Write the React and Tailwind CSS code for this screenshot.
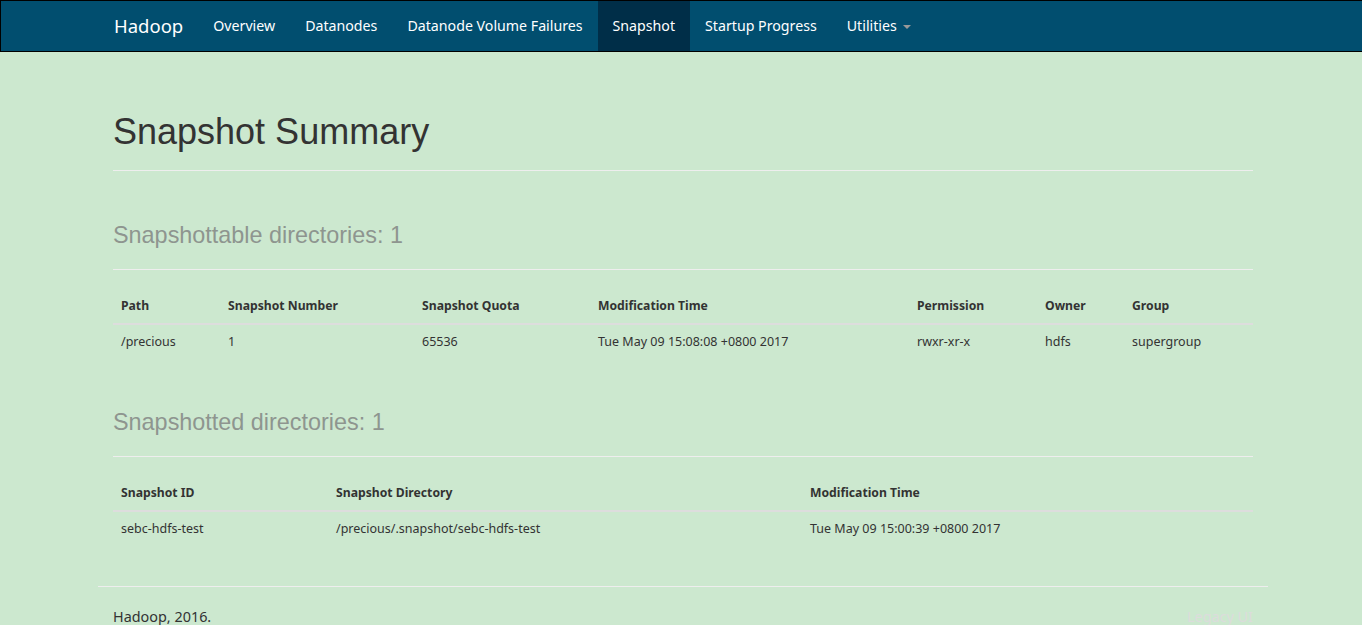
import React from "react";

const navItems = [
  { label: "Overview" },
  { label: "Datanodes" },
  { label: "Datanode Volume Failures" },
  { label: "Snapshot", active: true },
  { label: "Startup Progress" },
];

const snapshottable = {
  cols: [
    ["Path", "w-[107px]"],
    ["Snapshot Number", "w-[194px]"],
    ["Snapshot Quota", "w-[176px]"],
    ["Modification Time", "w-[319px]"],
    ["Permission", "w-[128px]"],
    ["Owner", "w-[87px]"],
    ["Group", ""],
  ],
  rows: [["/precious", "1", "65536", "Tue May 09 15:08:08 +0800 2017", "rwxr-xr-x", "hdfs", "supergroup"]],
};

const snapshotted = {
  cols: [
    ["Snapshot ID", "w-[215px]"],
    ["Snapshot Directory", "w-[474px]"],
    ["Modification Time", ""],
  ],
  rows: [["sebc-hdfs-test", "/precious/.snapshot/sebc-hdfs-test", "Tue May 09 15:00:39 +0800 2017"]],
};

const DataTable = ({ data }) => (
  <table className="w-full table-fixed border-collapse leading-[18px] text-[#333] [font-family:'Noto_Sans','Open_Sans',sans-serif]">
    <colgroup>
      {data.cols.map(([name, w]) => (
        <col key={name} className={w} />
      ))}
    </colgroup>
    <thead>
      <tr>
        {data.cols.map(([name]) => (
          <th key={name} className="border-b-2 border-[#dddddd] px-2 py-2 text-left text-[12.2px] font-bold">
            {name}
          </th>
        ))}
      </tr>
    </thead>
    <tbody>
      {data.rows.map((row, i) => (
        <tr key={i}>
          {row.map((cell, j) => (
            <td key={j} className="px-2 py-2 text-[12.5px] whitespace-nowrap">
              {cell}
            </td>
          ))}
        </tr>
      ))}
    </tbody>
  </table>
);

const SectionTitle = ({ children }) => (
  <div className="border-b border-[#eeeeee] pb-[21px]">
    <h2 className="text-[23.4px] leading-[26px] text-[#8e958f] [font-family:'Liberation_Sans',Arial,sans-serif]">
      {children}
    </h2>
  </div>
);

export default function App() {
  return (
    <div className="min-h-[625px] bg-[#cce8cf] [font-family:'Noto_Sans','Open_Sans',sans-serif] text-[#333]">
      <nav className="h-[52px] border border-r-0 border-black bg-[#014e6f]">
        <div className="ml-[98px] flex h-full w-[1170px] items-stretch px-[15px]">
          <div className="flex items-center pr-[15px] text-[18.5px] text-white">Hadoop</div>
          {navItems.map((item) => (
            <div
              key={item.label}
              className={`flex items-center px-[15px] text-[14.2px] text-white ${
                item.active ? "bg-[#002e48]" : ""
              }`}
            >
              {item.label}
            </div>
          ))}
          <div className="flex items-center gap-[6px] px-[15px] text-[14.2px] text-white">
            Utilities
            <span className="mt-[1px] h-0 w-0 border-x-[4px] border-t-[4px] border-x-transparent border-t-[#999]" />
          </div>
        </div>
      </nav>

      <main className="ml-[98px] w-[1170px] px-[15px]">
        <div className="mt-[60px] border-b border-[#eeeeee] pb-[18px]">
          <h1 className="text-[36px] leading-[40px] text-[#333] [font-family:'Liberation_Sans',Arial,sans-serif]">
            Snapshot Summary
          </h1>
        </div>

        <section className="mt-[51px]">
          <SectionTitle>Snapshottable directories: 1</SectionTitle>
          <div className="mt-[19px]">
            <DataTable data={snapshottable} />
          </div>
        </section>

        <section className="mt-[50px]">
          <SectionTitle>Snapshotted directories: 1</SectionTitle>
          <div className="mt-[19px]">
            <DataTable data={snapshotted} />
          </div>
        </section>
      </main>

      <footer className="ml-[98px] mt-[40px] w-[1170px] border-t border-[#eeeeee] px-[15px] pt-[20px]">
        <div className="flex items-center justify-between text-[14.4px] leading-[20px]">
          <span className="text-[#333]">Hadoop, 2016.</span>
          <span className="text-[#dcdcdc]">Legacy UI</span>
        </div>
      </footer>
    </div>
  );
}
